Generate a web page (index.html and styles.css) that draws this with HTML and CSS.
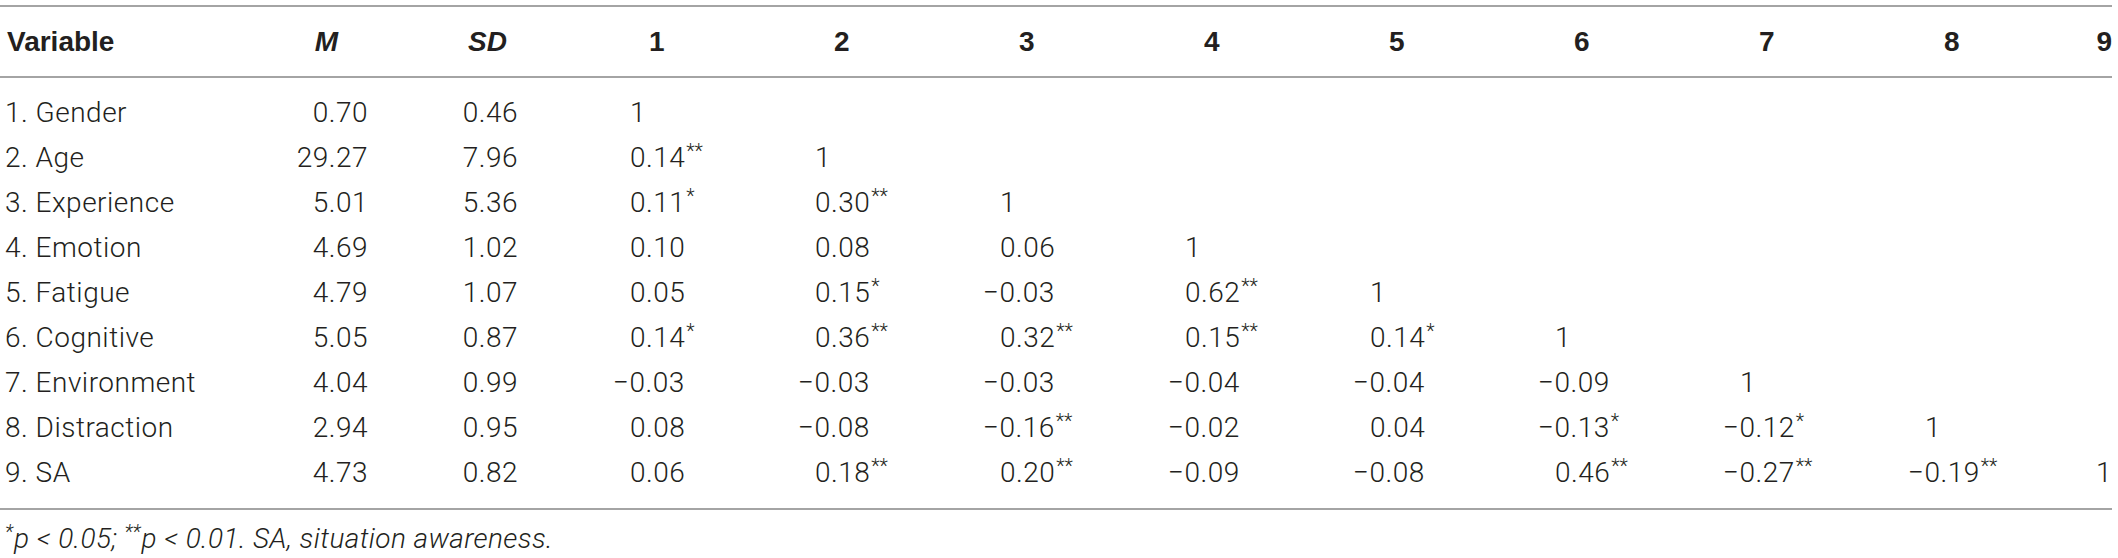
FILE: index.html
```html
<!DOCTYPE html>
<html lang="en">
<head>
<meta charset="utf-8">
<title>Correlations</title>
<link rel="stylesheet" href="styles.css">
</head>
<body>
<div class="wrap">
<table class="corr">
  <colgroup>
    <col class="c-name"><col class="c-m"><col class="c-sd">
    <col class="c-n"><col class="c-n"><col class="c-n"><col class="c-n">
    <col class="c-n"><col class="c-n"><col class="c-n"><col class="c-n">
    <col class="c-last">
  </colgroup>
  <thead>
    <tr>
      <th class="h-name">Variable</th>
      <th class="h-m"><i>M</i></th>
      <th class="h-sd"><i>SD</i></th>
      <th class="h-n">1</th><th class="h-n">2</th><th class="h-n">3</th><th class="h-n">4</th>
      <th class="h-n">5</th><th class="h-n">6</th><th class="h-n">7</th><th class="h-n">8</th>
      <th class="h-last">9</th>
    </tr>
  </thead>
  <tbody>
    <tr>
      <td class="name">1. Gender</td><td class="m">0.70</td><td class="sd">0.46</td>
      <td class="n">1</td><td class="n"></td><td class="n"></td><td class="n"></td><td class="n"></td><td class="n"></td><td class="n"></td><td class="n"></td><td class="last"></td>
    </tr>
    <tr>
      <td class="name">2. Age</td><td class="m">29.27</td><td class="sd">7.96</td>
      <td class="n">0.14<sup>**</sup></td><td class="n">1</td><td class="n"></td><td class="n"></td><td class="n"></td><td class="n"></td><td class="n"></td><td class="n"></td><td class="last"></td>
    </tr>
    <tr>
      <td class="name">3. Experience</td><td class="m">5.01</td><td class="sd">5.36</td>
      <td class="n">0.11<sup>*</sup></td><td class="n">0.30<sup>**</sup></td><td class="n">1</td><td class="n"></td><td class="n"></td><td class="n"></td><td class="n"></td><td class="n"></td><td class="last"></td>
    </tr>
    <tr>
      <td class="name">4. Emotion</td><td class="m">4.69</td><td class="sd">1.02</td>
      <td class="n">0.10</td><td class="n">0.08</td><td class="n">0.06</td><td class="n">1</td><td class="n"></td><td class="n"></td><td class="n"></td><td class="n"></td><td class="last"></td>
    </tr>
    <tr>
      <td class="name">5. Fatigue</td><td class="m">4.79</td><td class="sd">1.07</td>
      <td class="n">0.05</td><td class="n">0.15<sup>*</sup></td><td class="n neg">&minus;0.03</td><td class="n">0.62<sup>**</sup></td><td class="n">1</td><td class="n"></td><td class="n"></td><td class="n"></td><td class="last"></td>
    </tr>
    <tr>
      <td class="name">6. Cognitive</td><td class="m">5.05</td><td class="sd">0.87</td>
      <td class="n">0.14<sup>*</sup></td><td class="n">0.36<sup>**</sup></td><td class="n">0.32<sup>**</sup></td><td class="n">0.15<sup>**</sup></td><td class="n">0.14<sup>*</sup></td><td class="n">1</td><td class="n"></td><td class="n"></td><td class="last"></td>
    </tr>
    <tr>
      <td class="name">7. Environment</td><td class="m">4.04</td><td class="sd">0.99</td>
      <td class="n neg">&minus;0.03</td><td class="n neg">&minus;0.03</td><td class="n neg">&minus;0.03</td><td class="n neg">&minus;0.04</td><td class="n neg">&minus;0.04</td><td class="n neg">&minus;0.09</td><td class="n">1</td><td class="n"></td><td class="last"></td>
    </tr>
    <tr>
      <td class="name">8. Distraction</td><td class="m">2.94</td><td class="sd">0.95</td>
      <td class="n">0.08</td><td class="n neg">&minus;0.08</td><td class="n neg">&minus;0.16<sup>**</sup></td><td class="n neg">&minus;0.02</td><td class="n">0.04</td><td class="n neg">&minus;0.13<sup>*</sup></td><td class="n neg">&minus;0.12<sup>*</sup></td><td class="n">1</td><td class="last"></td>
    </tr>
    <tr>
      <td class="name">9. SA</td><td class="m">4.73</td><td class="sd">0.82</td>
      <td class="n">0.06</td><td class="n">0.18<sup>**</sup></td><td class="n">0.20<sup>**</sup></td><td class="n neg">&minus;0.09</td><td class="n neg">&minus;0.08</td><td class="n">0.46<sup>**</sup></td><td class="n neg">&minus;0.27<sup>**</sup></td><td class="n neg">&minus;0.19<sup>**</sup></td><td class="last">1</td>
    </tr>
  </tbody>
</table>
<p class="note"><sup>*</sup><i>p</i> &lt; 0.05; <sup>**</sup><i>p</i> &lt; 0.01. SA, situation awareness.</p>
</div>
</body>
</html>
```

FILE: styles.css
```css
html, body {
  margin: 0;
  padding: 0;
  background: #ffffff;
}

.wrap {
  width: 2112px;
  padding-top: 5px;
}

.corr {
  width: 2112px;
  table-layout: fixed;
  border-collapse: separate;
  border-spacing: 0;
  font-family: Roboto, "Liberation Sans", Arial, sans-serif;
  font-weight: 300;
  font-size: 28px;
  letter-spacing: 0.5px;
  color: #231f20;
}

.c-name { width: 250px; }
.c-m { width: 130px; }
.c-sd { width: 150px; }
.c-n { width: 185px; }
.c-last { width: 102px; }

.corr th {
  font-family: "Liberation Sans", Arial, sans-serif;
  font-weight: 700;
  font-size: 28px;
  letter-spacing: 0;
  line-height: 69px;
  padding: 0;
  border-top: 2px solid #a4a4a4;
  border-bottom: 2px solid #a4a4a4;
  white-space: nowrap;
}

.corr th i { font-style: italic; }

.h-name { text-align: left; padding-left: 7px !important; }
.h-m { text-align: right; padding-right: 42px !important; }
.h-sd { text-align: right; padding-right: 23px !important; }
.h-n { text-align: left; padding-left: 119px !important; }
.h-last { text-align: right; }

.corr td {
  padding: 0;
  line-height: 45px;
  white-space: nowrap;
  vertical-align: middle;
}

.corr tbody tr:first-child td { padding-top: 12px; }
.corr tbody tr:last-child td {
  padding-bottom: 13px;
  border-bottom: 2px solid #a4a4a4;
}

.name { text-align: left; padding-left: 5px !important; }
.m { text-align: right; padding-right: 12px !important; }
.sd { text-align: right; padding-right: 12px !important; }
.n { text-align: left; padding-left: 100px !important; }
.neg { text-indent: -17px; }
.last { text-align: right; }

.corr sup, .note sup {
  font-size: 0.7em;
  vertical-align: 0.45em;
  line-height: 0;
  letter-spacing: 0;
  margin-left: 1px;
}

.note {
  margin: 12px 0 0 0;
  padding-left: 5px;
  font-family: Roboto, "Liberation Sans", Arial, sans-serif;
  font-weight: 300;
  font-style: italic;
  font-size: 28px;
  letter-spacing: 0.4px;
  line-height: 34px;
  color: #231f20;
}

.note i { font-style: italic; }
.note sup { margin-left: 0; margin-right: 1px; }
```
